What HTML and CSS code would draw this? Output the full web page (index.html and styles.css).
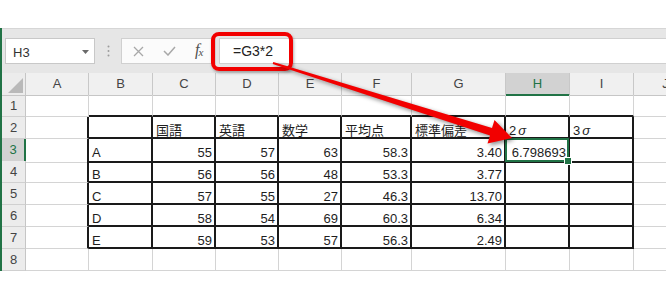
FILE: index.html
```html
<!DOCTYPE html>
<html lang="ja">
  <head>
    <meta charset="UTF-8" />
    <title>標準偏差 2σ</title>
    <link rel="stylesheet" href="styles.css">
  </head>
  <body>
    <div class="top"></div>
    <div class="app">
      <div class="formula-bar">
        <div class="name-box">
          <span>H3</span>
          <svg class="caret" width="7" height="4" viewBox="0 0 7 4"><polygon points="0,0 7,0 3.5,4" fill="#6a6a6a"/></svg>
        </div>
        <div class="grip">
          <svg width="3" height="12" viewBox="0 0 3 12">
            <circle cx="1.5" cy="1.5" r="1" fill="#9c9c9c"/>
            <circle cx="1.5" cy="6" r="1" fill="#9c9c9c"/>
            <circle cx="1.5" cy="10.5" r="1" fill="#9c9c9c"/>
          </svg>
        </div>
        <div class="fx-box">
          <svg class="ico-cancel" width="11" height="11" viewBox="0 0 11 11">
            <path d="M1 1 L10 10 M10 1 L1 10" stroke="#a8a8a8" stroke-width="1.3" fill="none"/>
          </svg>
          <svg class="ico-enter" width="13" height="10" viewBox="0 0 13 10">
            <path d="M1 5 L5 9 L12 1" stroke="#a8a8a8" stroke-width="1.5" fill="none"/>
          </svg>
          <span class="fx"><i>f</i><sub>x</sub></span>
        </div>
        <div class="formula">=G3*2</div>
      </div>

      <div class="sheet">
        <div class="row">
          <div class="corner"></div>
          <div class="ch">A</div><div class="ch">B</div><div class="ch">C</div><div class="ch">D</div><div class="ch">E</div>
          <div class="ch">F</div><div class="ch">G</div><div class="ch sel">H</div><div class="ch">I</div><div class="ch">J</div>
        </div>
        <div class="row">
          <div class="rh">1</div>
          <div class="c"></div>
          <div class="c tt"></div><div class="c tt"></div><div class="c tt"></div><div class="c tt"></div>
          <div class="c tt"></div><div class="c tt"></div><div class="c tt"></div><div class="c tt"></div>
          <div class="c"></div>
        </div>
        <div class="row">
          <div class="rh">2</div>
          <div class="c tl"></div>
          <div class="c t"></div>
          <div class="c t">国語</div>
          <div class="c t">英語</div>
          <div class="c t">数学</div>
          <div class="c t">平均点</div>
          <div class="c t">標準偏差</div>
          <div class="c t">2<i class="sigma">σ</i></div>
          <div class="c t">3<i class="sigma">σ</i></div>
          <div class="c"></div>
        </div>
        <div class="row">
          <div class="rh sel">3</div>
          <div class="c tl"></div>
          <div class="c t">A</div>
          <div class="c t num">55</div>
          <div class="c t num">57</div>
          <div class="c t num">63</div>
          <div class="c t num">58.3</div>
          <div class="c t num">3.40</div>
          <div class="c t num cur">6.798693</div>
          <div class="c t"></div>
          <div class="c"></div>
        </div>
        <div class="row">
          <div class="rh">4</div>
          <div class="c tl"></div>
          <div class="c t">B</div>
          <div class="c t num">56</div>
          <div class="c t num">56</div>
          <div class="c t num">48</div>
          <div class="c t num">53.3</div>
          <div class="c t num">3.77</div>
          <div class="c t"></div>
          <div class="c t"></div>
          <div class="c"></div>
        </div>
        <div class="row">
          <div class="rh">5</div>
          <div class="c tl"></div>
          <div class="c t">C</div>
          <div class="c t num">57</div>
          <div class="c t num">55</div>
          <div class="c t num">27</div>
          <div class="c t num">46.3</div>
          <div class="c t num">13.70</div>
          <div class="c t"></div>
          <div class="c t"></div>
          <div class="c"></div>
        </div>
        <div class="row">
          <div class="rh">6</div>
          <div class="c tl"></div>
          <div class="c t">D</div>
          <div class="c t num">58</div>
          <div class="c t num">54</div>
          <div class="c t num">69</div>
          <div class="c t num">60.3</div>
          <div class="c t num">6.34</div>
          <div class="c t"></div>
          <div class="c t"></div>
          <div class="c"></div>
        </div>
        <div class="row">
          <div class="rh">7</div>
          <div class="c tl"></div>
          <div class="c t">E</div>
          <div class="c t num">59</div>
          <div class="c t num">53</div>
          <div class="c t num">57</div>
          <div class="c t num">56.3</div>
          <div class="c t num">2.49</div>
          <div class="c t"></div>
          <div class="c t"></div>
          <div class="c"></div>
        </div>
        <div class="row">
          <div class="rh">8</div>
          <div class="c"></div><div class="c"></div><div class="c"></div><div class="c"></div><div class="c"></div>
          <div class="c"></div><div class="c"></div><div class="c"></div><div class="c"></div><div class="c"></div>
        </div>
      </div>
    </div>

    <!-- annotation drawn over the screenshot -->
    <div class="callout"></div>
    <svg class="arrow" width="666" height="300" viewBox="0 0 666 300">
      <polygon fill="#f20000"
        points="273.3,62 492,128 494.5,120 512,138 487.5,143.5 490,135.5 272.7,64"/>
    </svg>
  </body>
</html>
```

FILE: styles.css
```css
* {
  box-sizing: border-box;
}

html,
body {
  margin: 0;
  padding: 0;
}

body {
  position: relative;
  width: 666px;
  height: 300px;
  overflow: hidden;
  background: #fff;
  font-family: "Liberation Sans", "Noto Sans CJK JP", sans-serif;
  color: #222;
  --cols: 24px 63px 64px 63px 63px 63px 70px 94px 64px 64px 64px;
}

.top {
  height: 28px;
}

.app {
  border-left: 2px solid #217346;
  overflow: hidden;
}

/* formula bar */
.formula-bar {
  height: 45px;
  display: flex;
  align-items: flex-start;
  padding: 9px 0 0 3px;
  background: #e6e6e6;
  border-top: 1px solid #d6d6d6;
}

.name-box {
  width: 90px;
  height: 26px;
  display: flex;
  align-items: center;
  justify-content: space-between;
  padding: 3px 5px 0 7px;
  background: #fff;
  border: 1px solid #c8c8c8;
  font-size: 13px;
  color: #333;
}

.name-box .caret {
  margin-bottom: 2px;
}

.grip {
  width: 26px;
  height: 26px;
  display: flex;
  align-items: center;
  justify-content: center;
}

.fx-box {
  width: 95px;
  height: 26px;
  display: flex;
  align-items: center;
  background: #fbfbfb;
  border: 1px solid #d0d0d0;
}

.ico-cancel {
  margin-left: 11px;
}

.ico-enter {
  margin-left: 19px;
}

.fx {
  margin-left: 19px;
  font-family: "Liberation Serif", serif;
  font-size: 16px;
  line-height: 16px;
  color: #505050;
}

.fx sub {
  font-size: 11px;
  font-style: italic;
  vertical-align: -1px;
  margin-left: -1px;
}

.formula {
  flex: 1;
  height: 26px;
  margin-left: 3px;
  padding-left: 13px;
  background: #fff;
  border: 1px solid #d0d0d0;
  border-right: none;
  font-size: 14px;
  line-height: 24px;
  color: #222;
}

/* sheet grid */
.row {
  display: grid;
  grid-template-columns: var(--cols);
  height: 22px;
}

.corner {
  position: relative;
  background: #ececec;
  border-right: 1px solid #c6c6c6;
  border-bottom: 1px solid #c6c6c6;
}

.corner::after {
  content: "";
  position: absolute;
  right: 2px;
  bottom: 2px;
  width: 15px;
  height: 15px;
  background: #b9b9b9;
  clip-path: polygon(100% 0, 100% 100%, 0 100%);
}

.ch {
  padding-top: 1px;
  background: #f0f0f0;
  border-right: 1px solid #c8c8c8;
  border-bottom: 1px solid #c6c6c6;
  text-align: center;
  font-size: 13px;
  line-height: 20px;
  color: #444;
}

.ch.sel {
  background: #d2d2d2;
  color: #217346;
  border-bottom: 2px solid #217346;
}

.rh {
  background: #ececec;
  border-right: 1px solid #c6c6c6;
  border-bottom: 1px solid #d0d0d0;
  text-align: center;
  font-size: 13px;
  line-height: 21px;
  color: #444;
}

.rh.sel {
  background: #d2d2d2;
  color: #217346;
  border-right: 2px solid #217346;
}

.c {
  padding: 5px 2px 0 3px;
  border-right: 1px solid #d4d4d4;
  border-bottom: 1px solid #d4d4d4;
  font-size: 13px;
  line-height: 17px;
  white-space: nowrap;
  overflow: hidden;
  color: #1e1e1e;
}

.c.num {
  text-align: right;
}

.c.t {
  border-right: 2px solid #1a1a1a;
  border-bottom: 2px solid #1a1a1a;
}

.c.tl {
  border-right: 2px solid #1a1a1a;
}

.c.tt {
  border-bottom: 2px solid #1a1a1a;
}

.sigma {
  margin-left: 2px;
}

/* active cell */
.c.cur {
  position: relative;
  overflow: visible;
}

.c.cur::after {
  content: "";
  position: absolute;
  left: -1px;
  top: -1px;
  right: -1px;
  bottom: -1px;
  border: 2px solid #217346;
}

.c.cur::before {
  content: "";
  position: absolute;
  right: -4px;
  bottom: -4px;
  width: 6px;
  height: 6px;
  background: #217346;
  border: 1px solid #fff;
  z-index: 1;
}

/* red annotation */
.callout {
  position: absolute;
  left: 211px;
  top: 32px;
  width: 82px;
  height: 39px;
  border: 4px solid #f20000;
  border-radius: 8px;
  box-shadow: 1px 2px 3px rgba(0, 0, 0, 0.3);
}

.arrow {
  position: absolute;
  left: 0;
  top: 0;
  filter: drop-shadow(2px 2px 2px rgba(0, 0, 0, 0.45));
}
```
